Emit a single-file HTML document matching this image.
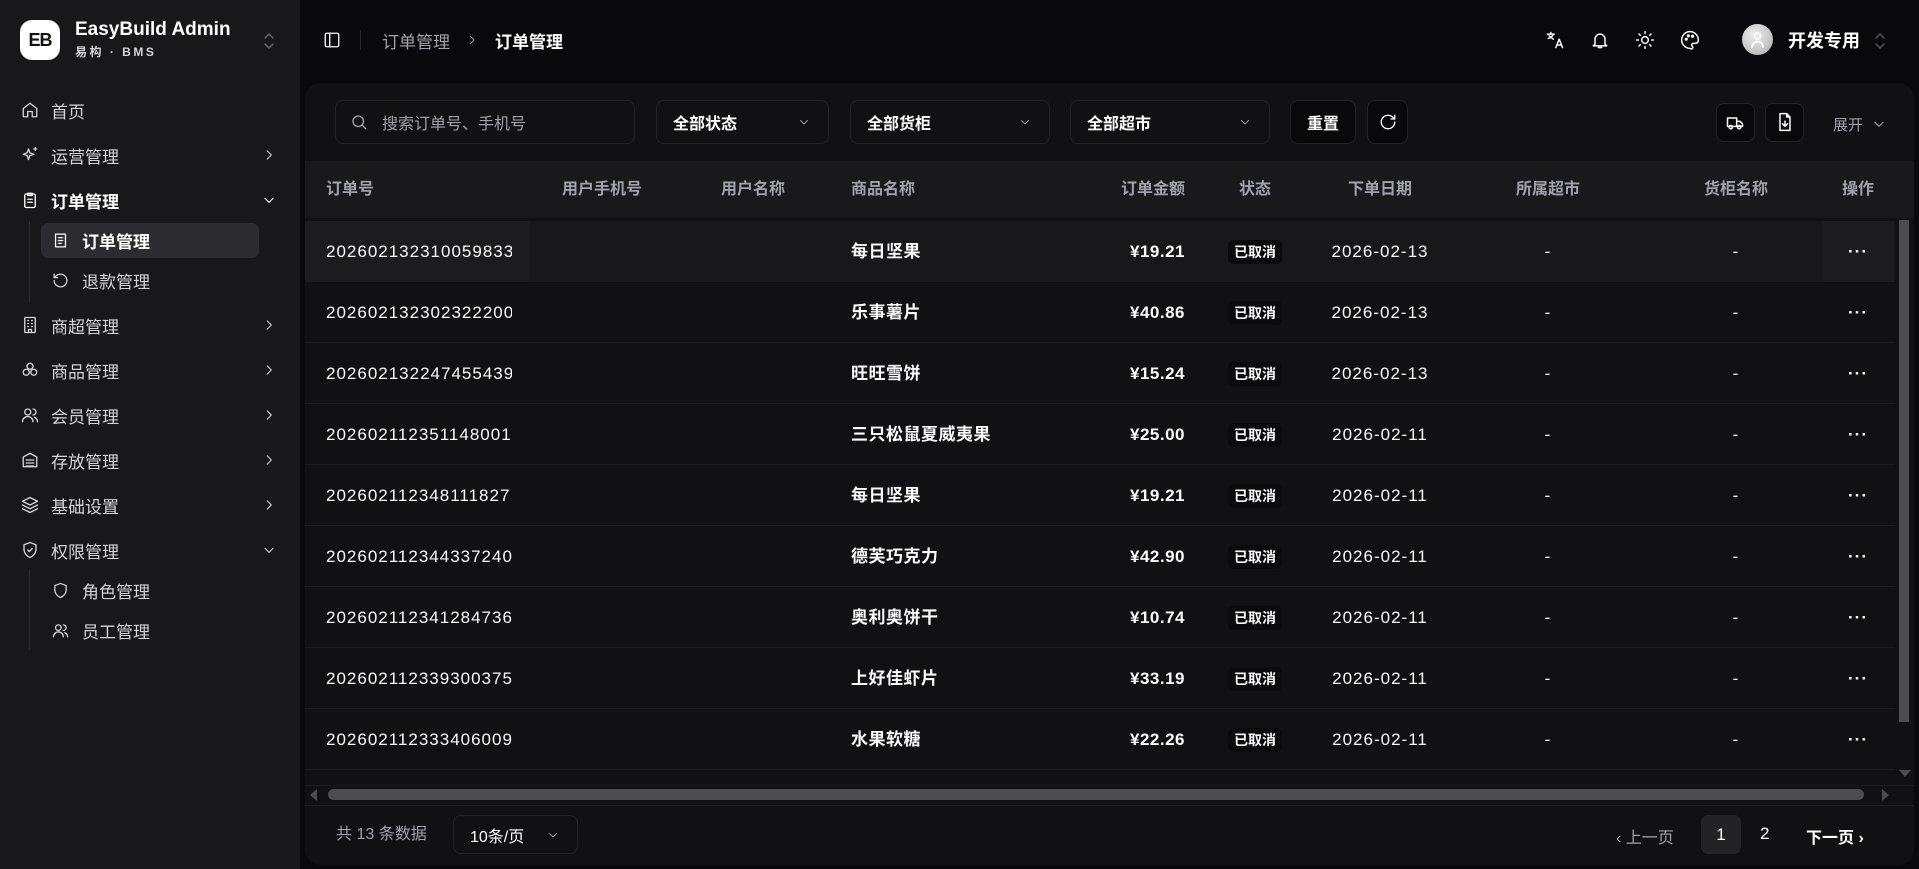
<!DOCTYPE html>
<html><head><meta charset="utf-8"><style>
*{box-sizing:border-box;margin:0;padding:0}
body{width:1919px;height:869px;background:#09090b;font-family:"Liberation Sans","Noto Sans CJK SC",sans-serif;color:#fafafa;position:relative;overflow:hidden}
.abs{position:absolute}
.side{left:0;top:0;width:300px;height:869px;background:#18181b}
.mi{position:absolute;left:0;width:300px;height:40px;display:flex;align-items:center;font-size:17px;color:#d4d4d8}
.mi svg{position:absolute;left:21px;width:18px;height:18px;fill:none;stroke:#d4d4d8;stroke-width:1.8;stroke-linecap:round;stroke-linejoin:round}
.mi span{position:absolute;left:51px}
.mi .ch{position:absolute;left:262px;width:14px;height:14px}
.sub svg{left:52px;width:17px;height:17px}
.sub span{left:82px}
.hi svg{stroke:#fff;stroke-width:1.8;fill:none}
.card{left:305px;top:83px;width:1609px;height:782px;background:#111113;border-radius:16px}
.box{position:absolute;top:100px;height:44px;border:1px solid #232326;border-radius:8px;background:#111113;display:flex;align-items:center;font-size:16px;font-weight:bold;color:#fff;padding-left:16px}
.box .dn{position:absolute;right:18px;top:15px;width:12px;height:12px}
.th{position:absolute;top:161px;left:305px;width:1609px;height:57px;background:#19191c}
.th div{position:absolute;top:0;line-height:57px;font-size:16px;font-weight:bold;color:#a1a1aa}
.row{position:absolute;left:305px;width:1590px;height:61px;border-bottom:1px solid #1c1c1f}
.row div{position:absolute;top:0;line-height:61px;font-size:17px;color:#fafafa;white-space:nowrap;overflow:hidden;letter-spacing:1px}
.row .b{font-weight:bold;letter-spacing:0.5px}
.bd{display:inline-block;line-height:24px!important;position:relative!important;background:#0b0b0d;border-radius:5px;padding:0 6px;font-size:14px;font-weight:bold;letter-spacing:0}
svg.ic{position:absolute;fill:none;stroke:#fafafa;stroke-width:1.8;stroke-linecap:round;stroke-linejoin:round}
</style></head><body>
<div class="abs side"></div>
<div class="abs" style="left:20px;top:20px;width:40px;height:40px;background:#fff;border-radius:12px;color:#111;font-weight:bold;font-size:18px;line-height:40px;text-align:center;letter-spacing:-1px">EB</div>
<div class="abs" style="left:75px;top:19px;font-size:19px;font-weight:bold;color:#fff">EasyBuild Admin</div>
<div class="abs" style="left:75px;top:43px;font-size:12px;font-weight:bold;color:#d4d4d8;letter-spacing:2.5px">易构 · BMS</div>
<svg class="ic" style="left:262px;top:31px;stroke:#666;stroke-width:1.5" width="14" height="20" viewBox="0 0 14 20"><path d="M3 7l4-4 4 4M3 13l4 4 4-4"/></svg>

<div class="mi" style="top:90px"><svg viewBox="0 0 24 24"><path d="M3 10l9-7 9 7v10a1 1 0 0 1-1 1h-5v-7H9v7H4a1 1 0 0 1-1-1z"/></svg><span>首页</span></div>
<div class="mi" style="top:135px"><svg viewBox="0 0 24 24"><path d="M10 4l1.8 5.2L17 11l-5.2 1.8L10 18l-1.8-5.2L3 11l5.2-1.8zM19 2v4M17 4h4"/></svg><span>运营管理</span><svg class="ch" viewBox="0 0 24 24" style="left:262px"><path d="M9 5l7 7-7 7"/></svg></div>
<div class="mi hi" style="top:180px;color:#fff;font-weight:bold"><svg viewBox="0 0 24 24"><rect x="5" y="4" width="14" height="18" rx="2"/><path d="M9 3h6v3H9zM9 11h6M9 15h6"/></svg><span>订单管理</span><svg class="ch" viewBox="0 0 24 24" style="left:262px"><path d="M5 9l7 7 7-7"/></svg></div>
<div class="abs" style="left:29px;top:221px;width:1px;height:82px;background:#2a2a2e"></div>
<div class="abs" style="left:41px;top:223px;width:218px;height:35px;background:#2c2c30;border-radius:7px"></div>
<div class="mi sub hi" style="top:220px;color:#fff;font-weight:bold"><svg viewBox="0 0 24 24"><path d="M5 3h14v18H5zM9 8h6M9 12h6M9 16h4"/></svg><span>订单管理</span></div>
<div class="mi sub" style="top:260px"><svg viewBox="0 0 24 24"><path d="M3 12a9 9 0 1 0 3-6.7L3 8M3 3v5h5"/></svg><span>退款管理</span></div>
<div class="mi" style="top:305px"><svg viewBox="0 0 24 24"><rect x="5" y="2" width="14" height="20" rx="1"/><path d="M9 6h1M14 6h1M9 10h1M14 10h1M9 14h1M14 14h1M10 22v-4h4v4"/></svg><span>商超管理</span><svg class="ch" viewBox="0 0 24 24"><path d="M9 5l7 7-7 7"/></svg></div>
<div class="mi" style="top:350px"><svg viewBox="0 0 24 24"><circle cx="12" cy="7" r="4"/><circle cx="7" cy="15" r="4"/><circle cx="17" cy="15" r="4"/></svg><span>商品管理</span><svg class="ch" viewBox="0 0 24 24"><path d="M9 5l7 7-7 7"/></svg></div>
<div class="mi" style="top:395px"><svg viewBox="0 0 24 24"><circle cx="9" cy="8" r="4"/><path d="M2 21a7 7 0 0 1 14 0M16 4a4 4 0 0 1 0 8M22 21a7 7 0 0 0-4-6"/></svg><span>会员管理</span><svg class="ch" viewBox="0 0 24 24"><path d="M9 5l7 7-7 7"/></svg></div>
<div class="mi" style="top:440px"><svg viewBox="0 0 24 24"><path d="M3 21V8l9-5 9 5v13zM7 12h10M7 16h10M7 20h10"/></svg><span>存放管理</span><svg class="ch" viewBox="0 0 24 24"><path d="M9 5l7 7-7 7"/></svg></div>
<div class="mi" style="top:485px"><svg viewBox="0 0 24 24"><path d="M12 2l10 5-10 5L2 7zM2 12l10 5 10-5M2 17l10 5 10-5"/></svg><span>基础设置</span><svg class="ch" viewBox="0 0 24 24"><path d="M9 5l7 7-7 7"/></svg></div>
<div class="mi" style="top:530px"><svg viewBox="0 0 24 24"><path d="M12 2l8 3v6c0 5-3.5 9-8 11-4.5-2-8-6-8-11V5zM9 12l2 2 4-4"/></svg><span>权限管理</span><svg class="ch" viewBox="0 0 24 24"><path d="M5 9l7 7 7-7"/></svg></div>
<div class="abs" style="left:29px;top:570px;width:1px;height:80px;background:#2a2a2e"></div>
<div class="mi sub" style="top:570px"><svg viewBox="0 0 24 24"><path d="M12 2l8 3v6c0 5-3.5 9-8 11-4.5-2-8-6-8-11V5z"/></svg><span>角色管理</span></div>
<div class="mi sub" style="top:610px"><svg viewBox="0 0 24 24"><circle cx="9" cy="8" r="4"/><path d="M2 21a7 7 0 0 1 14 0M16 4a4 4 0 0 1 0 8M22 21a7 7 0 0 0-4-6"/></svg><span>员工管理</span></div>

<!-- header -->
<svg class="ic" style="left:323px;top:31px" width="18" height="18" viewBox="0 0 24 24"><rect x="3" y="3" width="18" height="18" rx="2"/><path d="M9 3v18"/></svg>
<div class="abs" style="left:360px;top:30px;width:1px;height:20px;background:#27272a"></div>
<div class="abs" style="left:382px;top:28px;font-size:17px;color:#a1a1aa">订单管理</div>
<svg class="ic" style="left:466px;top:34px;stroke:#a1a1aa" width="12" height="12" viewBox="0 0 24 24"><path d="M9 5l7 7-7 7"/></svg>
<div class="abs" style="left:495px;top:28px;font-size:17px;color:#fff;font-weight:bold">订单管理</div>
<svg class="ic" style="left:1545px;top:30px" width="20" height="20" viewBox="0 0 24 24"><path d="M3 5h8M7 3v2M4 10c2 0 5-2 6-5M5 7l5 4M13 21l4-10 4 10M14.5 18h5"/></svg>
<svg class="ic" style="left:1590px;top:30px" width="20" height="20" viewBox="0 0 24 24"><path d="M6 17V11a6 6 0 0 1 12 0v6l2 2H4zM10 21h4"/></svg>
<svg class="ic" style="left:1635px;top:30px" width="20" height="20" viewBox="0 0 24 24"><circle cx="12" cy="12" r="4"/><path d="M12 2v2M12 20v2M4.9 4.9l1.4 1.4M17.7 17.7l1.4 1.4M2 12h2M20 12h2M4.9 19.1l1.4-1.4M17.7 6.3l1.4-1.4"/></svg>
<svg class="ic" style="left:1680px;top:30px" width="20" height="20" viewBox="0 0 24 24"><path d="M12 22a10 10 0 1 1 10-10c0 3-2 4-4 4h-2a2 2 0 0 0-1 3.7A1.6 1.6 0 0 1 12 22z"/><circle cx="7.5" cy="11" r="1"/><circle cx="10" cy="7" r="1"/><circle cx="15" cy="7.5" r="1"/></svg>
<div class="abs" style="left:1742px;top:24px;width:31px;height:31px;border-radius:50%;background:radial-gradient(circle at 40% 35%,#eee,#aaa)"></div>
<svg class="ic" style="left:1750px;top:30px;stroke:#fff" width="15" height="18" viewBox="0 0 15 18"><circle cx="7.5" cy="6" r="3"/><path d="M2 17a5.5 5.5 0 0 1 11 0"/></svg>
<div class="abs" style="left:1788px;top:27px;font-size:18px;font-weight:bold;color:#fff">开发专用</div>
<svg class="ic" style="left:1873px;top:31px;stroke:#555;stroke-width:1.5" width="14" height="20" viewBox="0 0 14 20"><path d="M3 7l4-4 4 4M3 13l4 4 4-4"/></svg>

<!-- card -->
<div class="abs card"></div>
<div class="box" style="left:335px;width:300px;padding-left:46px;font-weight:normal;color:#a1a1aa">搜索订单号、手机号</div>
<svg class="ic" style="left:350px;top:113px;stroke:#a1a1aa" width="18" height="18" viewBox="0 0 24 24"><circle cx="11" cy="11" r="7"/><path d="M21 21l-5-5"/></svg>
<div class="box" style="left:656px;width:173px">全部状态<svg class="dn ic" viewBox="0 0 24 24" style="stroke:#a1a1aa"><path d="M5 9l7 7 7-7"/></svg></div>
<div class="box" style="left:850px;width:200px">全部货柜<svg class="dn ic" viewBox="0 0 24 24" style="stroke:#a1a1aa"><path d="M5 9l7 7 7-7"/></svg></div>
<div class="box" style="left:1070px;width:200px">全部超市<svg class="dn ic" viewBox="0 0 24 24" style="stroke:#a1a1aa"><path d="M5 9l7 7 7-7"/></svg></div>
<div class="box" style="left:1290px;width:66px;background:#09090b;justify-content:center;padding:0">重置</div>
<div class="box" style="left:1367px;width:41px;background:#09090b;padding:0"></div>
<svg class="ic" style="left:1379px;top:113px" width="18" height="18" viewBox="0 0 24 24"><path d="M21 12a9 9 0 1 1-3-6.7L21 8M21 3v5h-5"/></svg>
<div class="box" style="left:1716px;top:103px;height:39px;width:39px;background:#09090b;padding:0"></div>
<svg class="ic" style="left:1725px;top:113px" width="20" height="20" viewBox="0 0 24 24"><path d="M3 6h11v10H3zM14 10h4l3 3v3h-7"/><circle cx="7" cy="17" r="2"/><circle cx="17" cy="17" r="2"/></svg>
<div class="box" style="left:1765px;top:103px;height:39px;width:39px;background:#09090b;padding:0"></div>
<svg class="ic" style="left:1775px;top:112px" width="20" height="20" viewBox="0 0 24 24"><path d="M14 2H6v20h12V6zM14 2v4h4M12 11v6M9 14l3 3 3-3"/></svg>
<div class="abs" style="left:1833px;top:114px;font-size:15px;color:#a1a1aa">展开</div>
<svg class="ic" style="left:1872px;top:117px;stroke:#a1a1aa" width="14" height="14" viewBox="0 0 24 24"><path d="M5 9l7 7 7-7"/></svg>

<div class="th">
<div style="left:21px">订单号</div><div style="left:257px">用户手机号</div><div style="left:416px">用户名称</div><div style="left:546px">商品名称</div>
<div style="left:780px;width:100px;text-align:right">订单金额</div><div style="left:900px;width:100px;text-align:center">状态</div>
<div style="left:1000px;width:150px;text-align:center">下单日期</div><div style="left:1168px;width:150px;text-align:center">所属超市</div>
<div style="left:1356px;width:150px;text-align:center">货柜名称</div><div style="left:1517px;width:72px;text-align:center">操作</div>
</div>
<div class="abs" style="left:305px;top:221px;width:1590px;height:61px;background:#18181b"></div>

<div class="row" style="top:221px"><div style="left:0;width:225px;height:61px;background:#1c1c1f"></div><div style="left:21px;width:186px">202602132310059833</div><div class="b" style="left:546px">每日坚果</div><div style="left:780px;width:100px;text-align:right" class="b">¥19.21</div><div style="left:900px;width:100px;text-align:center"><span class="bd">已取消</span></div><div style="left:1000px;width:150px;text-align:center">2026-02-13</div><div style="left:1168px;width:150px;text-align:center">-</div><div style="left:1356px;width:150px;text-align:center">-</div><div style="left:1517px;width:72px;text-align:center;background:#1c1c1f;font-weight:bold">···</div></div>
<div class="row" style="top:282px"><div style="left:21px;width:186px">202602132302322200</div><div class="b" style="left:546px">乐事薯片</div><div style="left:780px;width:100px;text-align:right" class="b">¥40.86</div><div style="left:900px;width:100px;text-align:center"><span class="bd">已取消</span></div><div style="left:1000px;width:150px;text-align:center">2026-02-13</div><div style="left:1168px;width:150px;text-align:center">-</div><div style="left:1356px;width:150px;text-align:center">-</div><div style="left:1517px;width:72px;text-align:center;font-weight:bold">···</div></div>
<div class="row" style="top:343px"><div style="left:21px;width:186px">202602132247455439</div><div class="b" style="left:546px">旺旺雪饼</div><div style="left:780px;width:100px;text-align:right" class="b">¥15.24</div><div style="left:900px;width:100px;text-align:center"><span class="bd">已取消</span></div><div style="left:1000px;width:150px;text-align:center">2026-02-13</div><div style="left:1168px;width:150px;text-align:center">-</div><div style="left:1356px;width:150px;text-align:center">-</div><div style="left:1517px;width:72px;text-align:center;font-weight:bold">···</div></div>
<div class="row" style="top:404px"><div style="left:21px;width:186px">202602112351148001</div><div class="b" style="left:546px">三只松鼠夏威夷果</div><div style="left:780px;width:100px;text-align:right" class="b">¥25.00</div><div style="left:900px;width:100px;text-align:center"><span class="bd">已取消</span></div><div style="left:1000px;width:150px;text-align:center">2026-02-11</div><div style="left:1168px;width:150px;text-align:center">-</div><div style="left:1356px;width:150px;text-align:center">-</div><div style="left:1517px;width:72px;text-align:center;font-weight:bold">···</div></div>
<div class="row" style="top:465px"><div style="left:21px;width:186px">202602112348111827</div><div class="b" style="left:546px">每日坚果</div><div style="left:780px;width:100px;text-align:right" class="b">¥19.21</div><div style="left:900px;width:100px;text-align:center"><span class="bd">已取消</span></div><div style="left:1000px;width:150px;text-align:center">2026-02-11</div><div style="left:1168px;width:150px;text-align:center">-</div><div style="left:1356px;width:150px;text-align:center">-</div><div style="left:1517px;width:72px;text-align:center;font-weight:bold">···</div></div>
<div class="row" style="top:526px"><div style="left:21px;width:186px">202602112344337240</div><div class="b" style="left:546px">德芙巧克力</div><div style="left:780px;width:100px;text-align:right" class="b">¥42.90</div><div style="left:900px;width:100px;text-align:center"><span class="bd">已取消</span></div><div style="left:1000px;width:150px;text-align:center">2026-02-11</div><div style="left:1168px;width:150px;text-align:center">-</div><div style="left:1356px;width:150px;text-align:center">-</div><div style="left:1517px;width:72px;text-align:center;font-weight:bold">···</div></div>
<div class="row" style="top:587px"><div style="left:21px;width:186px">202602112341284736</div><div class="b" style="left:546px">奥利奥饼干</div><div style="left:780px;width:100px;text-align:right" class="b">¥10.74</div><div style="left:900px;width:100px;text-align:center"><span class="bd">已取消</span></div><div style="left:1000px;width:150px;text-align:center">2026-02-11</div><div style="left:1168px;width:150px;text-align:center">-</div><div style="left:1356px;width:150px;text-align:center">-</div><div style="left:1517px;width:72px;text-align:center;font-weight:bold">···</div></div>
<div class="row" style="top:648px"><div style="left:21px;width:186px">202602112339300375</div><div class="b" style="left:546px">上好佳虾片</div><div style="left:780px;width:100px;text-align:right" class="b">¥33.19</div><div style="left:900px;width:100px;text-align:center"><span class="bd">已取消</span></div><div style="left:1000px;width:150px;text-align:center">2026-02-11</div><div style="left:1168px;width:150px;text-align:center">-</div><div style="left:1356px;width:150px;text-align:center">-</div><div style="left:1517px;width:72px;text-align:center;font-weight:bold">···</div></div>
<div class="row" style="top:709px"><div style="left:21px;width:186px">202602112333406009</div><div class="b" style="left:546px">水果软糖</div><div style="left:780px;width:100px;text-align:right" class="b">¥22.26</div><div style="left:900px;width:100px;text-align:center"><span class="bd">已取消</span></div><div style="left:1000px;width:150px;text-align:center">2026-02-11</div><div style="left:1168px;width:150px;text-align:center">-</div><div style="left:1356px;width:150px;text-align:center">-</div><div style="left:1517px;width:72px;text-align:center;font-weight:bold">···</div></div>

<!-- scrollbars -->
<div class="abs" style="left:1899px;top:220px;width:10px;height:502px;background:#4d4d4f"></div>
<div class="abs" style="left:1899px;top:770px;width:0;height:0;border-left:6px solid transparent;border-right:6px solid transparent;border-top:7px solid #4d4d4f"></div>
<div class="abs" style="left:305px;top:785px;width:1609px;height:1px;background:#1c1c1f"></div>
<div class="abs" style="left:310px;top:789px;width:0;height:0;border-top:6px solid transparent;border-bottom:6px solid transparent;border-right:7px solid #4d4d4f"></div>
<div class="abs" style="left:328px;top:789px;width:1536px;height:11px;border-radius:6px;background:#4d4d4f"></div>
<div class="abs" style="left:1882px;top:789px;width:0;height:0;border-top:6px solid transparent;border-bottom:6px solid transparent;border-left:7px solid #4d4d4f"></div>
<div class="abs" style="left:305px;top:805px;width:1609px;height:1px;background:#1c1c1f"></div>

<!-- footer -->
<div class="abs" style="left:336px;top:825px;font-size:16px;color:#a1a1aa;line-height:20px">共 13 条数据</div>
<div class="box" style="left:453px;top:815px;width:125px;height:39px;font-weight:normal;padding-left:16px">10条/页<svg class="dn ic" viewBox="0 0 24 24" style="stroke:#a1a1aa;top:13px"><path d="M5 9l7 7 7-7"/></svg></div>
<div class="abs" style="left:1616px;top:824px;font-size:16px;color:#a1a1aa">‹ 上一页</div>
<div class="abs" style="left:1701px;top:815px;width:40px;height:39px;border-radius:7px;background:#232326;font-size:17px;line-height:39px;text-align:center;color:#fff">1</div>
<div class="abs" style="left:1760px;top:824px;font-size:17px;color:#fff">2</div>
<div class="abs" style="left:1806px;top:824px;font-size:16px;color:#fff;font-weight:bold">下一页 ›</div>
</body></html>
